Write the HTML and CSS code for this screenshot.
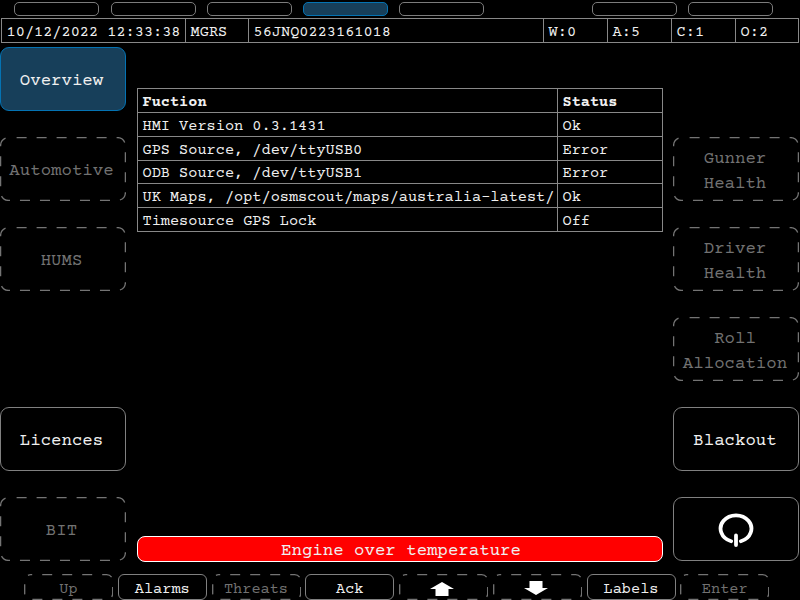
FILE: index.html
```html
<!DOCTYPE html>
<html lang="en">
<head>
<meta charset="utf-8">
<title>BMS</title>
<link rel="stylesheet" href="styles.css">
</head>
<body>
<div class="screen">
  <nav class="tabs">
    <span class="tab"></span><span class="tab"></span><span class="tab"></span><span class="tab active"></span><span class="tab"></span><span class="tab apart"></span><span class="tab"></span>
  </nav>
  <div class="statusbar">
    <span>10/12/2022 12:33:38</span><span>MGRS</span><span>56JNQ0223161018</span><span>W:0</span><span>A:5</span><span>C:1</span><span>O:2</span>
  </div>
  <div class="body">
    <div class="side left">
      <button class="key active">Overview</button>
      <button class="key off"><svg class="dash"><rect x=".6" y=".6" width="124.8" height="62.8" rx="8"/></svg>Automotive</button>
      <button class="key off"><svg class="dash"><rect x=".6" y=".6" width="124.8" height="62.8" rx="8"/></svg>HUMS</button>
      <span></span>
      <button class="key">Licences</button>
      <button class="key off"><svg class="dash"><rect x=".6" y=".6" width="124.8" height="62.8" rx="8"/></svg>BIT</button>
    </div>
    <main class="main">
      <table class="report">
        <colgroup><col class="fn"><col></colgroup>
        <tr><th>Fuction</th><th>Status</th></tr>
        <tr><td>HMI Version 0.3.1431</td><td>Ok</td></tr>
        <tr><td>GPS Source, /dev/ttyUSB0</td><td>Error</td></tr>
        <tr class="tight"><td>ODB Source, /dev/ttyUSB1</td><td>Error</td></tr>
        <tr><td>UK Maps, /opt/osmscout/maps/australia-latest/</td><td>Ok</td></tr>
        <tr><td>Timesource GPS Lock</td><td>Off</td></tr>
      </table>
      <div class="alarm">Engine over temperature</div>
    </main>
    <div class="side right">
      <span></span>
      <button class="key off"><svg class="dash"><rect x=".6" y=".6" width="124.8" height="62.8" rx="8"/></svg>Gunner<br>Health</button>
      <button class="key off"><svg class="dash"><rect x=".6" y=".6" width="124.8" height="62.8" rx="8"/></svg>Driver<br>Health</button>
      <button class="key off"><svg class="dash"><rect x=".6" y=".6" width="124.8" height="62.8" rx="8"/></svg>Roll<br>Allocation</button>
      <button class="key">Blackout</button>
      <button class="key" aria-label="Power"><svg class="power" viewBox="0 0 36 36"><path d="M13.1 29.2A15.4 13.3 0 1 1 22.9 29.2M18 23.5V33"/></svg></button>
    </div>
  </div>
  <footer class="softkeys">
    <button class="soft off"><svg class="dash"><rect x=".7" y=".7" width="88" height="24.8" rx="6"/></svg>Up</button>
    <button class="soft">Alarms</button>
    <button class="soft off"><svg class="dash"><rect x=".7" y=".7" width="88" height="24.8" rx="6"/></svg>Threats</button>
    <button class="soft">Ack</button>
    <button class="soft off"><svg class="dash"><rect x=".7" y=".7" width="88" height="24.8" rx="6"/></svg><svg class="arrow" viewBox="0 0 24 14"><path d="M12 0L24 7H18.5V14H5.5V7H0Z"/></svg></button>
    <button class="soft off"><svg class="dash"><rect x=".7" y=".7" width="88" height="24.8" rx="6"/></svg><svg class="arrow down" viewBox="0 0 24 14"><path d="M12 14L24 7H18.5V0H5.5V7H0Z"/></svg></button>
    <button class="soft">Labels</button>
    <button class="soft off"><svg class="dash"><rect x=".7" y=".7" width="88" height="24.8" rx="6"/></svg>Enter</button>
  </footer>
</div>
</body>
</html>
```
FILE: styles.css
```css
* { box-sizing: border-box; }
body { margin: 0; background: #000; color: #f0f0f0; font: 15.28px/24px "Courier Prime", "FreeMono", "Nimbus Mono PS", "Liberation Mono", monospace; }
.screen { width: 800px; height: 600px; overflow: hidden; display: flex; flex-direction: column; }
.tabs { display: flex; gap: 11.3px; padding: 2px 0 0 14.3px; height: 18px; flex: none; }
.tab { width: 85px; height: 14px; border: 1px solid #7c7c7c; border-radius: 5px; }
.tab.apart { margin-left: 96px; }
.active { background: #173f5a; border-color: #0473b3 !important; }
.statusbar { display: grid; grid-template-columns: 183px 63px 295px 64px 64px 64px 63px; height: 25px; width: 798px; margin-left: 1px; border: 1px solid #888; flex: none; }
.statusbar span { height: 23px; padding: 2px 0 0 4.6px; line-height: 24px; white-space: nowrap; border-left: 1px solid #888; }
.statusbar span:first-child { border-left: 0; }
.body { display: grid; grid-template-columns: 126px 1fr 127px; height: 531px; flex: none; padding-top: 4px; }
.side { display: grid; grid-template-rows: repeat(6, 64px); row-gap: 26px; }
.key, .soft { position: relative; display: flex; align-items: center; justify-content: center; margin: 0; background: #000; border: 1px solid #808080; color: #f0f0f0; font-family: inherit; }
.key { width: 126px; height: 64px; padding: 4px 2px 0 0; border-radius: 9px; font-size: 17.4px; line-height: 25px; }
.left .key { padding-right: 3px; }
.right .key.off { padding-top: 6px; }
.key.active { background: #173f5a; }
.key.off, .soft.off { border-color: transparent; color: #727272; }
.dash { position: absolute; left: -1px; top: -1px; width: calc(100% + 2px); height: calc(100% + 2px); fill: none; stroke: #747474; stroke-width: 1.3; stroke-dasharray: 10 10; stroke-dashoffset: -8; }
.soft .dash { stroke-dashoffset: -11.5; }
.main { display: flex; flex-direction: column; justify-content: space-between; padding: 41px 10px 12px 11px; }
.report { border-collapse: collapse; table-layout: fixed; width: 526px; }
.report .fn { width: 420px; }
.report th, .report td { height: 24px; border: 1px solid #888; padding: 4px 0 0 4.5px; line-height: 19px; text-align: left; vertical-align: bottom; white-space: nowrap; }
.report .tight td { height: 23px; line-height: 18px; }
.alarm { height: 26px; padding: 1px 0 0 2px; border: 1px solid #fff; border-radius: 8px; background: #f00; text-align: center; font-size: 17.4px; line-height: 27px; }
.power { width: 36px; height: 36px; margin: 0 0 2px 2px; fill: none; stroke: #fff; stroke-width: 3.8; stroke-linecap: round; }
.softkeys { display: flex; gap: 4.75px; padding-left: 24px; flex: none; }
.soft { width: 89px; height: 26px; padding: 4px 0 0; border-radius: 6px; font-size: 15.28px; }
.arrow { width: 24px; height: 14px; margin: 0 2.5px 1px 0; fill: #fff; }
.arrow.down { margin-bottom: 3px; }
```
